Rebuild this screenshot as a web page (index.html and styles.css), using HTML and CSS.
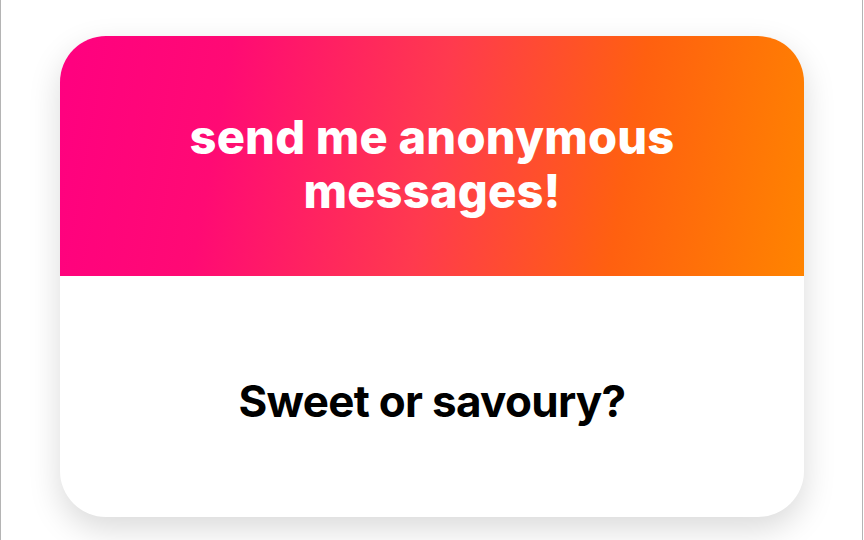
FILE: index.html
```html
<!DOCTYPE html>
<html>
<head>
<meta charset="utf-8">
<link rel="stylesheet" href="styles.css">
</head>
<body>
<div class="frame">
  <div class="card">
    <div class="head">
      <h1 class="title">send me anonymous<br>messages!</h1>
    </div>
    <div class="body">
      <p class="question">Sweet or savoury?</p>
    </div>
  </div>
</div>
</body>
</html>
```
FILE: styles.css
```css
html, body {
  margin: 0;
  padding: 0;
  background: #ffffff;
}
.frame {
  box-sizing: border-box;
  width: 863px;
  height: 540px;
  border-left: 1px solid #b4b4b4;
  border-right: 1px solid #b4b4b4;
  padding: 36px 0 0 59px;
}
.card {
  width: 744px;
  height: 481px;
  border-radius: 46px;
  overflow: hidden;
  background: #fff;
  box-shadow: 0 12px 32px rgba(0,0,0,0.15);
  display: flex;
  flex-direction: column;
}
.head {
  box-sizing: border-box;
  height: 240px;
  padding-top: 16px;
  background: linear-gradient(100deg, #ff0080 0%, #ff0a74 22%, #ff3a4e 50%, #ff6010 75%, #ff8400 100%);
  display: flex;
  align-items: center;
  justify-content: center;
}
.title {
  margin: 0;
  color: #fff;
  font-family: Inter, "Liberation Sans", sans-serif;
  font-weight: 800;
  font-size: 47px;
  line-height: 54px;
  letter-spacing: 0.2px;
  text-align: center;
}
.body {
  flex: 1;
  box-sizing: border-box;
  padding-top: 8px;
  display: flex;
  align-items: center;
  justify-content: center;
}
.question {
  margin: 0;
  font-family: Inter, "Liberation Sans", sans-serif;
  font-weight: 700;
  font-size: 44px;
  color: #000;
  letter-spacing: -0.7px;
}
```
